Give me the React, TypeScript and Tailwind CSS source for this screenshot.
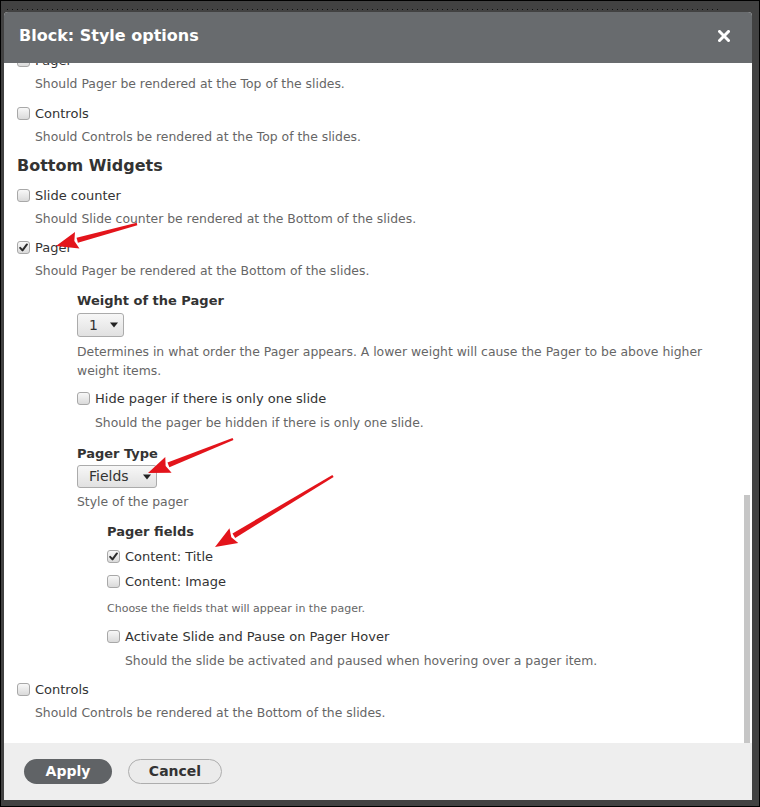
import React from "react";

const Checkbox = ({ checked }: { checked?: boolean }) => (
  <span className="w-[13px] h-[13px] shrink-0 rounded-[3px] border border-[#a8a8a8] bg-[linear-gradient(#f8f8f8,#dadada)] flex items-center justify-center -mt-[2px]">
    {checked && (
      <svg width="9" height="9" viewBox="0 0 10 10">
        <path d="M1.3 5.4 L3.9 8.2 L8.8 1.6" stroke="#2b2b2b" strokeWidth="2.2" fill="none" strokeLinecap="round" strokeLinejoin="round" />
      </svg>
    )}
  </span>
);

const CheckRow = ({ label, checked }: { label: string; checked?: boolean }) => (
  <div className="flex items-center h-[20px] gap-[5px] text-[13px] text-[#333]">
    <Checkbox checked={checked} />
    <span>{label}</span>
  </div>
);

const Desc = ({ children, className = "" }: { children: React.ReactNode; className?: string }) => (
  <div className={"text-[12.4px] leading-[19px] text-[#666] " + className}>{children}</div>
);

const Item = ({
  label,
  desc,
  checked,
  className = "",
  children,
}: {
  label: string;
  desc: string;
  checked?: boolean;
  className?: string;
  children?: React.ReactNode;
}) => (
  <div className={"flex flex-col " + className}>
    <CheckRow label={label} checked={checked} />
    <Desc className="pl-[18px] mt-[3px]">{desc}</Desc>
    {children}
  </div>
);

const Select = ({ value, width, className = "" }: { value: string; width: string; className?: string }) => (
  <div
    className={
      "border border-[#ababab] rounded-[3px] bg-[linear-gradient(#f7f7f7,#e1e1e1)] flex items-center justify-between pl-[11px] pr-[5px] text-[14px] text-[#333] " +
      width +
      " " +
      className
    }
  >
    <span>{value}</span>
    <svg width="8" height="6" viewBox="0 0 8 6">
      <polygon points="0,0.5 8,0.5 4,5.5" fill="#222" />
    </svg>
  </div>
);

const Arrow = ({ x1, y1, x2, y2 }: { x1: number; y1: number; x2: number; y2: number }) => {
  const dx = x2 - x1;
  const dy = y2 - y1;
  const len = Math.hypot(dx, dy);
  const ux = dx / len;
  const uy = dy / len;
  const hl = 22;
  const hw = 8.5;
  const bx = x2 - ux * hl;
  const by = y2 - uy * hl;
  const px = -uy;
  const py = ux;
  const pts = `${x2},${y2} ${bx + px * hw},${by + py * hw} ${bx + ux * 3},${by + uy * 3} ${bx - px * hw},${by - py * hw}`;
  const tail = `${x1 + px * 1.2},${y1 + py * 1.2} ${x1 - px * 1.2},${y1 - py * 1.2} ${bx - px * 2.6},${by - py * 2.6} ${bx + px * 2.6},${by + py * 2.6}`;
  return (
    <g fill="#e3141b">
      <polygon points={tail} />
      <polygon points={pts} />
    </g>
  );
};

export default function App() {
  return (
    <div className="relative w-[760px] h-[807px] bg-[#424242] border border-black overflow-hidden font-['DejaVu_Sans',sans-serif]">
      <div className="h-[11px] pt-[8px] pl-[6px] pr-[40px]">
        <div className="h-[1px] bg-[repeating-linear-gradient(90deg,#111_0_1px,transparent_1px_5px)]" />
      </div>
      <div className="ml-[3px] w-[748px] h-[788px] flex flex-col bg-white rounded-t-[4px] overflow-hidden">
        <div className="h-[51px] shrink-0 bg-[#686b6e] flex items-center justify-between pl-[15px] pr-[22px] pb-[3px]">
          <span className="text-[16px] font-bold text-white">Block: Style options</span>
          <svg width="12" height="12" viewBox="0 0 12 12">
            <path d="M1.5 1.5 L10.5 10.5 M10.5 1.5 L1.5 10.5" stroke="#fff" strokeWidth="3" strokeLinecap="square" />
          </svg>
        </div>
        <div className="flex-1 flex flex-row overflow-hidden">
          <div className="flex-1 pl-[13px] overflow-hidden">
            <div className="flex flex-col -mt-[12px]">
              <Item label="Pager" desc="Should Pager be rendered at the Top of the slides." />
              <Item className="mt-[11px]" label="Controls" desc="Should Controls be rendered at the Top of the slides." />
              <div className="mt-[9px] h-[22px] leading-[22px] text-[16px] font-bold text-[#333]">Bottom Widgets</div>
              <Item className="mt-[9px]" label="Slide counter" desc="Should Slide counter be rendered at the Bottom of the slides." />
              <Item className="mt-[10px]" label="Pager" checked desc="Should Pager be rendered at the Bottom of the slides.">
                <div className="pl-[60px] flex flex-col">
                  <div className="mt-[11px] h-[20px] leading-[20px] text-[13px] font-bold text-[#333]">Weight of the Pager</div>
                  <Select value="1" width="w-[47px]" className="mt-[2px] h-[24px]" />
                  <Desc className="mt-[5px]">
                    Determines in what order the Pager appears. A lower weight will cause the Pager to be above higher
                    <br />
                    weight items.
                  </Desc>
                  <div className="mt-[9px] flex flex-col">
                    <CheckRow label="Hide pager if there is only one slide" />
                    <Desc className="pl-[18px] mt-[4px]">Should the pager be hidden if there is only one slide.</Desc>
                  </div>
                  <div className="mt-[12px] h-[20px] leading-[20px] text-[13px] font-bold text-[#333]">Pager Type</div>
                  <Select value="Fields" width="w-[80px]" className="mt-[1px] h-[23px]" />
                  <Desc className="mt-[4px]">Style of the pager</Desc>
                  <div className="pl-[30px] flex flex-col">
                    <div className="mt-[11px] h-[20px] leading-[20px] text-[13px] font-bold text-[#333]">Pager fields</div>
                    <div className="mt-[5px]">
                      <CheckRow label="Content: Title" checked />
                    </div>
                    <div className="mt-[5px]">
                      <CheckRow label="Content: Image" />
                    </div>
                    <div className="mt-[8px] text-[11px] leading-[17px] text-[#666]">Choose the fields that will appear in the pager.</div>
                    <div className="mt-[10px] flex flex-col">
                      <CheckRow label="Activate Slide and Pause on Pager Hover" />
                      <Desc className="pl-[18px] mt-[4px]">Should the slide be activated and paused when hovering over a pager item.</Desc>
                    </div>
                  </div>
                </div>
              </Item>
              <Item className="mt-[10px]" label="Controls" desc="Should Controls be rendered at the Bottom of the slides." />
            </div>
          </div>
          <div className="w-[8px] shrink-0 pt-[432px]">
            <div className="w-[6px] h-[248px] bg-[#c6c6c6]" />
          </div>
        </div>
        <div className="h-[57px] shrink-0 bg-[#eeeeee] flex items-center gap-[16px] pl-[20px]">
          <button className="w-[88px] h-[25px] rounded-full bg-[#606366] text-white font-bold text-[14px] flex items-center justify-center">
            Apply
          </button>
          <button className="w-[94px] h-[25px] rounded-full bg-[#ebebeb] border border-[#adadad] text-[#333] font-bold text-[14px] flex items-center justify-center">
            Cancel
          </button>
        </div>
      </div>
      <svg className="absolute left-0 top-0 pointer-events-none" width="760" height="807" viewBox="0 0 760 807">
        <Arrow x1={136} y1={223} x2={55} y2={245} />
        <Arrow x1={232} y1={438} x2={147} y2={472} />
        <Arrow x1={332} y1={475} x2={214} y2={546} />
      </svg>
    </div>
  );
}
